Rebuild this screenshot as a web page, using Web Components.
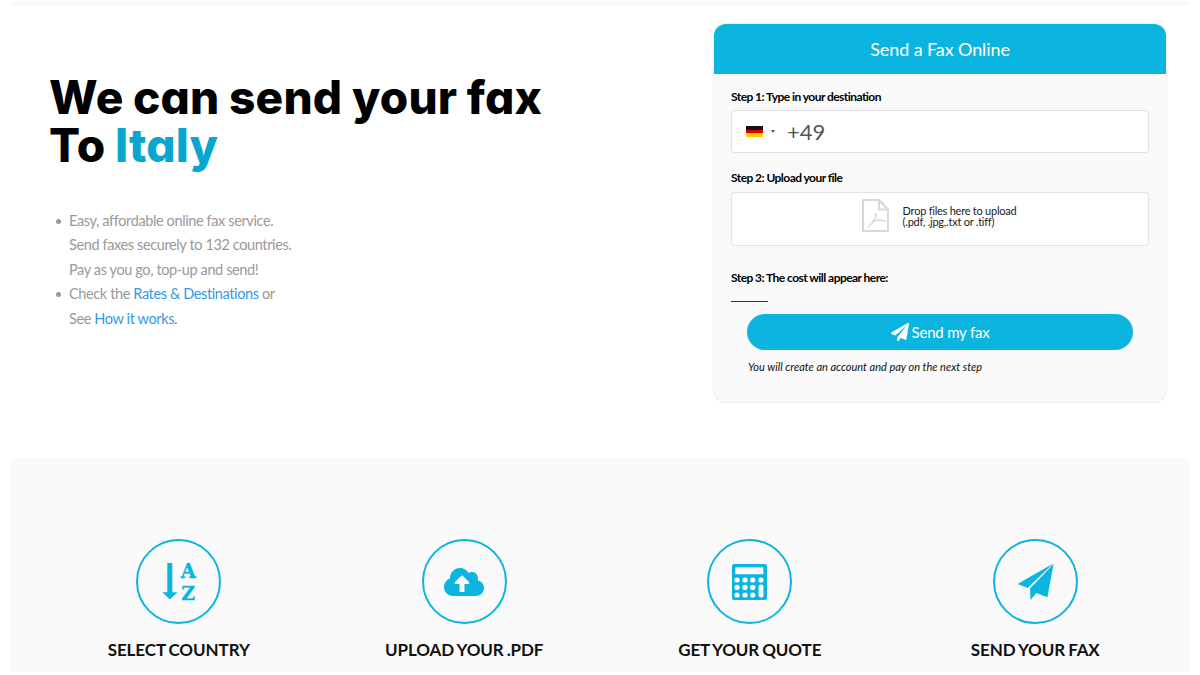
<!DOCTYPE html>
<html lang="en">
<head>
<meta charset="utf-8">
<title>Send a Fax Online</title>
<style>
    html, body { margin: 0; padding: 0; background: #fff; }
    body { font-family: Lato, "Liberation Sans", sans-serif; height: 675px; overflow: hidden; }
</style>
</head>
<body>
<fax-page></fax-page>

<script>
const PLANE = 'M476 3.2L12.5 270.6c-18.1 10.4-15.8 35.6 2.2 43.2L121 358.4l287.3-253.2c5.5-4.9 13.3 2.6 8.6 8.3L176 407v80.5c0 23.6 28.5 32.9 42.5 15.8L282 426l124.6 52.2c14.2 6 30.4-2.9 33-18.2l72-432C515 7.8 493.3-6.8 476 3.2z';
const CLOUD = 'M537.6 226.6c4.1-10.7 6.4-22.4 6.4-34.6 0-53-43-96-96-96-19.7 0-38.1 6-53.3 16.2C367 64.2 315.3 32 256 32c-88.4 0-160 71.6-160 160 0 2.7.1 5.4.2 8.1C40.2 219.8 0 273.2 0 336c0 79.5 64.5 144 144 144h368c70.7 0 128-57.3 128-128 0-61.9-44-113.6-102.4-125.4zM393.4 288H328v112c0 8.8-7.2 16-16 16h-48c-8.8 0-16-7.2-16-16V288h-65.4c-14.3 0-21.4-17.2-11.3-27.3l105.4-105.4c6.2-6.2 16.4-6.2 22.6 0l105.4 105.4c10.1 10.1 2.9 27.3-11.3 27.3z';

const calcDots = () => {
    const xs = [5, 13, 20.7, 29];
    const ys = [16, 23.4, 31];
    let dots = '';
    ys.forEach((y, row) => {
        xs.forEach((x, col) => {
            if (col === 3 && row > 0) return;
            dots += `<circle cx="${x}" cy="${y}" r="2.6" fill="#fff"/>`;
        });
    });
    return dots;
};

const stepIcons = {
    sort: `<svg width="50" height="50" viewBox="0 0 50 50">
            <g transform="translate(1 -1.5)">
                <path d="M12.3 7.5h5v29.2h5L15 44l-7.7-7.3h5z" fill="#0cb5e0"/>
                <text x="33.3" y="22.7" text-anchor="middle" font-family="'DejaVu Serif',serif" font-weight="700" font-size="19.5" fill="#0cb5e0" stroke="#0cb5e0" stroke-width=".4">A</text>
                <text x="33.3" y="44" text-anchor="middle" font-family="'DejaVu Serif',serif" font-weight="700" font-size="19" fill="#0cb5e0" stroke="#0cb5e0" stroke-width=".4">Z</text>
            </g>
        </svg>`,
    cloud: `<svg width="40" height="32" viewBox="0 0 640 512"><path d="${CLOUD}" fill="#0cb5e0"/></svg>`,
    calc: `<svg width="35" height="36" viewBox="0 0 35 36">
            <rect width="35" height="36" rx="2" fill="#0cb5e0"/>
            <rect x="3.3" y="3.4" width="28" height="6.8" fill="#fafafa"/>
            ${calcDots()}
            <rect x="26.6" y="20.6" width="4.8" height="13" rx="2.4" fill="#fff"/>
        </svg>`,
    plane: `<svg width="50" height="50" viewBox="0 0 50 50" fill="#0cb5e0">
            <g transform="translate(0 -1.5)">
                <path d="M43.3 8L7.6 28.5l10 4z"/>
                <path d="M43.6 8.6L20 33l.5 10.6c0 .5.5.5.8.1l4.9-6.2 11.2 4.2z"/>
            </g>
        </svg>`
};

class TopEdge extends HTMLElement {
    constructor() {
        super();
        this.attachShadow({ mode: 'open' });
        this.shadowRoot.innerHTML = `
            <style>
                :host {
                    display: block;
                    height: 6px;
                    margin: 0 10px;
                    background: linear-gradient(#fff, #f8f8f8 50%, #fefefe);
                }
            </style>
        `;
    }
}

class HeroCopy extends HTMLElement {
    constructor() {
        super();
        this.attachShadow({ mode: 'open' });
        this.shadowRoot.innerHTML = `
            <style>
                :host {
                    display: block;
                    padding: 49px 0 0 49px;
                }
                h1 {
                    margin: 0;
                    font-family: Inter, "Liberation Sans", sans-serif;
                    font-feature-settings: "cv11";
                    font-weight: 800;
                    font-size: 46px;
                    line-height: 48px;
                    letter-spacing: 0.2px;
                    word-spacing: -0.75px;
                    color: #000;
                }
                h1 span { color: #08a6cf; }
                ul {
                    margin: 39.5px 0 0;
                    padding: 0 0 0 20px;
                    list-style: none;
                    font-family: Lato, sans-serif;
                    font-size: 14.5px;
                    line-height: 24.5px;
                    letter-spacing: -0.38px;
                    color: #999;
                }
                li::before {
                    content: "";
                    display: inline-block;
                    width: 5px;
                    height: 5px;
                    margin: 0 8px 0 -13px;
                    vertical-align: 2px;
                    border-radius: 50%;
                    background: #999;
                }
                a {
                    color: #2f9be8;
                    text-decoration: none;
                }
            </style>
            <h1>We can send your fax<br>To <span>Italy</span></h1>
            <ul>
                <li>Easy, affordable online fax service.<br>Send faxes securely to 132 countries.<br>Pay as you go, top-up and send!</li>
                <li>Check the <a href="#">Rates &amp; Destinations</a> or<br>See <a href="#">How it works.</a></li>
            </ul>
        `;
    }
}

class FaxCard extends HTMLElement {
    constructor() {
        super();
        this.attachShadow({ mode: 'open' });
        this.shadowRoot.innerHTML = `
            <style>
                :host {
                    display: block;
                    width: 452px;
                    height: 378px;
                    box-sizing: border-box;
                    background: #fafafa;
                    border-radius: 12px;
                    box-shadow: 0 0 2px rgba(0, 0, 0, .2);
                    overflow: hidden;
                    font-family: Lato, sans-serif;
                    color: #111;
                }
                header {
                    height: 50px;
                    display: flex;
                    align-items: center;
                    justify-content: center;
                    background: #0cb5e0;
                    color: #fff;
                    font-size: 18px;
                    letter-spacing: -0.1px;
                }
                .body { padding: 16px 17px 0; }
                .label {
                    font-size: 12px;
                    font-weight: 700;
                    line-height: 14px;
                    letter-spacing: -0.55px;
                    color: #000;
                }
                .box {
                    box-sizing: border-box;
                    background: #fff;
                    border: 1px solid #e2e2e6;
                    border-radius: 4px;
                    box-shadow: 0 0 1px rgba(0, 0, 0, .08);
                }
                .phone {
                    height: 43px;
                    margin-top: 6px;
                    padding: 0 0 1px 14px;
                    display: flex;
                    align-items: center;
                    font-size: 22px;
                    color: #555;
                }
                .flag {
                    width: 17px;
                    height: 11px;
                    background: linear-gradient(#111 0 33.3%, #d00 33.3% 66.6%, #fc0 66.6%);
                }
                .caret {
                    width: 0;
                    height: 0;
                    margin: 0 12px 0 8px;
                    border: 2.5px solid transparent;
                    border-top: 3px solid #555;
                    border-bottom: 0;
                }
                .step2 { margin-top: 18px; }
                .drop {
                    height: 53.5px;
                    margin-top: 7px;
                    padding: 0 2px 6px 0;
                    display: flex;
                    align-items: center;
                    justify-content: center;
                    gap: 14px;
                    font-size: 11px;
                    line-height: 11px;
                    letter-spacing: -0.24px;
                    color: #222;
                }
                .step3 { margin-top: 25.5px; }
                .cost {
                    width: 37px;
                    height: 1px;
                    margin-top: 16px;
                    background: #333;
                }
            </style>
            <header>Send a Fax Online</header>
            <div class="body">
                <div class="label">Step 1: Type in your destination</div>
                <div class="box phone"><span class="flag"></span><span class="caret"></span>+49</div>
                <div class="label step2">Step 2: Upload your file</div>
                <div class="box drop">
                    <svg width="27" height="33" viewBox="0 0 27 33" fill="none" stroke="#d8d8d8" stroke-width="2">
                        <path d="M1 1h16l9 9.5V32H1z"/>
                        <path d="M17 1v9.5h9"/>
                        <path d="M6 28c4-3 8-8 8-14M10 23c4-2 10-3 14 0" stroke-width="1.5"/>
                    </svg>
                    <div>Drop files here to upload<br>(.pdf, .jpg,.txt or .tiff)</div>
                </div>
                <div class="label step3">Step 3: The cost will appear here:</div>
                <div class="cost"></div>
                <slot></slot>
            </div>
        `;
    }
}

class SendButton extends HTMLElement {
    constructor() {
        super();
        this.attachShadow({ mode: 'open' });
        this.shadowRoot.innerHTML = `
            <style>
                :host {
                    display: block;
                    margin: 12px 16px 0;
                    font-family: Lato, sans-serif;
                }
                button {
                    width: 100%;
                    height: 35.5px;
                    display: flex;
                    align-items: center;
                    justify-content: center;
                    gap: 3px;
                    border: 0;
                    border-radius: 18px;
                    background: #0cb5e0;
                    color: #fff;
                    font: 15px Lato, sans-serif;
                    letter-spacing: -0.2px;
                }
                p {
                    margin: 10.5px 0 0 1px;
                    font-size: 11px;
                    line-height: 14px;
                    font-style: italic;
                    color: #111;
                }
            </style>
            <button type="button">
                <svg width="18" height="18" viewBox="0 0 512 512"><path d="${PLANE}" fill="#fff"/></svg>
                Send my fax
            </button>
            <p>You will create an account and pay on the next step</p>
        `;
    }
}

class HowStep extends HTMLElement {
    constructor() {
        super();
        this.attachShadow({ mode: 'open' });
        const icon = stepIcons[this.getAttribute('icon')];
        this.shadowRoot.innerHTML = `
            <style>
                :host {
                    display: flex;
                    flex-direction: column;
                    align-items: center;
                }
                .ring {
                    box-sizing: border-box;
                    width: 85px;
                    height: 85px;
                    display: flex;
                    align-items: center;
                    justify-content: center;
                    border: 2.5px solid #0cb5e0;
                    border-radius: 50%;
                }
                .name {
                    margin-top: 16px;
                    font-family: Lato, sans-serif;
                    font-size: 17px;
                    line-height: 20px;
                    font-weight: 700;
                    letter-spacing: -0.1px;
                    word-spacing: -1px;
                    color: #111;
                    white-space: nowrap;
                }
            </style>
            <div class="ring">${icon}</div>
            <div class="name"><slot></slot></div>
        `;
    }
}

class HowSteps extends HTMLElement {
    constructor() {
        super();
        this.attachShadow({ mode: 'open' });
        this.shadowRoot.innerHTML = `
            <style>
                :host {
                    display: grid;
                    grid-template-columns: repeat(4, 1fr);
                    height: 214px;
                    box-sizing: border-box;
                    margin: 0 11px;
                    padding: 81px 11px 0 25px;
                    background: #fafafa;
                }
            </style>
            <slot></slot>
        `;
    }
}

class FaxPage extends HTMLElement {
    constructor() {
        super();
        this.attachShadow({ mode: 'open' });
        this.shadowRoot.innerHTML = `
            <style>
                :host { display: block; }
                .hero {
                    display: flex;
                    justify-content: space-between;
                    align-items: flex-start;
                    height: 452px;
                    padding: 18px 34px 0 0;
                    box-sizing: border-box;
                }
            </style>
            <top-edge></top-edge>
            <div class="hero">
                <hero-copy></hero-copy>
                <fax-card><send-button></send-button></fax-card>
            </div>
            <how-steps>
                <how-step icon="sort">SELECT COUNTRY</how-step>
                <how-step icon="cloud">UPLOAD YOUR .PDF</how-step>
                <how-step icon="calc">GET YOUR QUOTE</how-step>
                <how-step icon="plane">SEND YOUR FAX</how-step>
            </how-steps>
        `;
    }
}

customElements.define('top-edge', TopEdge);
customElements.define('hero-copy', HeroCopy);
customElements.define('fax-card', FaxCard);
customElements.define('send-button', SendButton);
customElements.define('how-step', HowStep);
customElements.define('how-steps', HowSteps);
customElements.define('fax-page', FaxPage);
</script>
</body>
</html>
